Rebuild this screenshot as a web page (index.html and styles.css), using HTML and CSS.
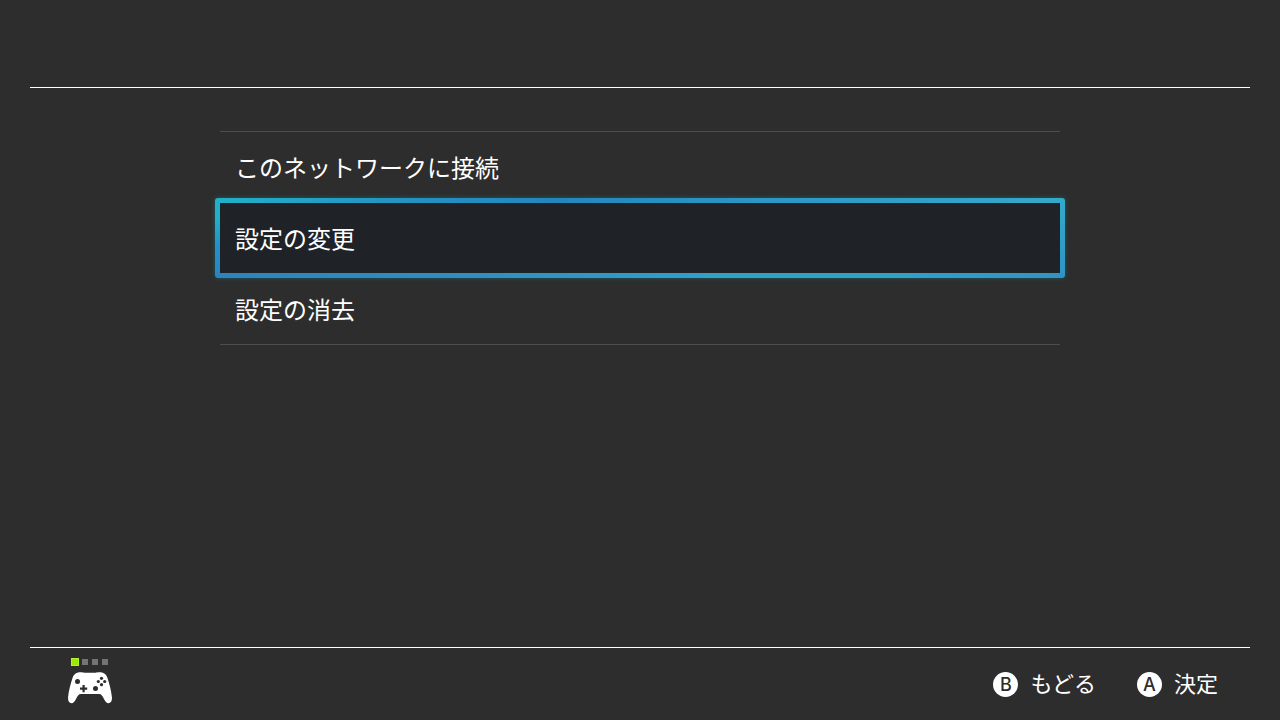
FILE: index.html
```html
<!DOCTYPE html>
<html lang="ja">
<head>
<meta charset="utf-8">
<meta name="viewport" content="width=device-width, initial-scale=1">
<title>ネットワーク設定</title>
<link rel="stylesheet" href="styles.css">
</head>
<body>
<div class="screen">
  <header class="header"></header>
  <main class="main">
    <ul class="menu">
      <li><button class="item" type="button">このネットワークに接続</button></li>
      <li><button class="item selected" type="button">設定の変更</button></li>
      <li><button class="item" type="button">設定の消去</button></li>
    </ul>
  </main>
  <footer class="footer">
    <div class="pad">
      <div class="players"><span class="player on"></span><span class="player"></span><span class="player"></span><span class="player"></span></div>
      <svg class="controller" viewBox="0 0 44 32" width="44" height="32" aria-hidden="true">
        <path fill="#fff" d="M10 0.5C12 0 15 0.2 16.5 0.8H27.500C29 0.2 32 0 34 0.500C37 1.200 38.600 3 39.500 6C41.500 12 43.300 19 43.900 25C44.300 29 43 31.200 40.500 31.200C38.500 31.200 37.300 29.500 36 27C34.500 24 33.600 22 31 22H13C10.400 22 9.500 24 8 27C6.700 29.500 5.500 31.200 3.500 31.200C1 31.200 -0.300 29 0.100 25C0.700 19 2.500 12 4.500 6C5.400 3 7 1.200 10 0.500Z"/>
        <g fill="#2d2d2d">
          <circle cx="9.500" cy="9.500" r="2.500"/>
          <circle cx="27.500" cy="16.500" r="2.500"/>
          <path d="M14.500 13h2.200v2.500h2.500v2.200h-2.500v2.500h-2.200v-2.500h-2.500v-2.200h2.500z"/>
          <circle cx="33.500" cy="6.300" r="1.600"/>
          <circle cx="33.500" cy="12.700" r="1.600"/>
          <circle cx="30.300" cy="9.500" r="1.600"/>
          <circle cx="36.700" cy="9.500" r="1.600"/>
        </g>
      </svg>
    </div>
    <div class="actions">
      <button class="action" type="button"><span class="key">B</span><span class="label">もどる</span></button>
      <button class="action" type="button"><span class="key">A</span><span class="label">決定</span></button>
    </div>
  </footer>
</div>
</body>
</html>
```
FILE: styles.css
```css
* { box-sizing: border-box; }

body {
  margin: 0;
  background: #2d2d2d;
  color: #fff;
  font-family: "Noto Sans CJK JP", sans-serif;
}

.screen {
  display: flex;
  flex-direction: column;
  min-height: 100vh;
  padding: 0 30px;
}

.header {
  height: 88px;
  border-bottom: 1px solid #fff;
}

.main {
  flex: 1;
  padding: 43px 190px;
}

.menu {
  display: grid;
  gap: 1px;
  margin: 0;
  padding: 0;
  list-style: none;
  border-top: 1px solid #4d4d4d;
  border-bottom: 1px solid #4d4d4d;
}

.menu li { display: grid; height: 70px; }

.item {
  padding: 0 15px;
  border: 0;
  background: transparent;
  color: inherit;
  font: 24px/36px "Noto Sans CJK JP", sans-serif;
  text-align: left;
}

.selected {
  margin: -5px;
  border: 5px solid transparent;
  border-radius: 3px;
  background:
    linear-gradient(#1f2328, #1f2328) padding-box,
    linear-gradient(90deg, #22b0c8, #2390c2 25%, #2387be 40%, #2b98c5 65%, #34aacb) top / 100% 5px no-repeat border-box,
    linear-gradient(90deg, #2b84c0, #2e8fc2 30%, #30a2c8 60%, #30a2c8 80%, #2f94c5) bottom / 100% 5px no-repeat border-box,
    linear-gradient(#22b0c8, #22b0c8 25%, #2390c8 60%, #2b84c0) left / 5px 100% no-repeat border-box,
    linear-gradient(#34aacb, #2f94c5) right / 5px 100% no-repeat border-box;
  box-shadow: 0 0 5px #167a8099;
}

.footer {
  display: flex;
  justify-content: space-between;
  height: 73px;
  padding: 0 32px 0 38px;
  border-top: 1px solid #fff;
}

.pad { padding-top: 10px; }

.players {
  display: flex;
  align-items: center;
  gap: 4px;
  height: 8px;
  padding-left: 3px;
}

.player { width: 6px; height: 6px; background: #747474; }

.player.on { width: 8px; height: 8px; margin-right: -1px; background: #9be800; border: 1px solid #b2f22e; }

.controller { display: block; margin-top: 6px; }

.actions { display: flex; gap: 41px; height: 73px; }

.action {
  display: flex;
  align-items: center;
  gap: 12px;
  padding: 0;
  border: 0;
  background: transparent;
  color: inherit;
  font: 22px/32px "Noto Sans CJK JP", sans-serif;
}

.label { padding-bottom: 5px; }

.key {
  width: 25px;
  height: 25px;
  border-radius: 50%;
  background: #fff;
  color: #2d2d2d;
  font: 500 18px/25px Inter, "Liberation Sans", sans-serif;
  text-align: center;
}
```
